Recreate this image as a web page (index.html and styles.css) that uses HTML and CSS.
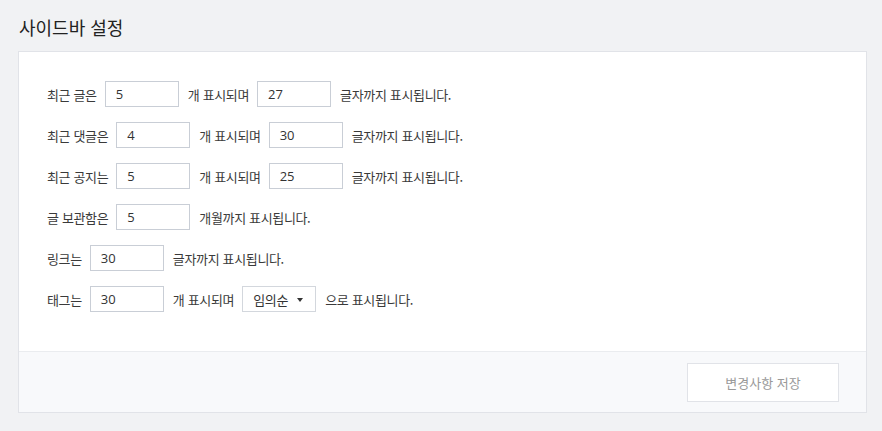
FILE: index.html
```html
<!DOCTYPE html>
<html lang="ko">
<head>
<meta charset="utf-8">
<link rel="stylesheet" href="styles.css">
</head>
<body>
<div class="page">
  <h1 class="title">사이드바 설정</h1>
  <div class="card">
    <div class="card-body">
      <div class="row"><span>최근 글은</span><span class="field">5</span><span>개 표시되며</span><span class="field">27</span><span>글자까지 표시됩니다.</span></div>
      <div class="row"><span>최근 댓글은</span><span class="field">4</span><span>개 표시되며</span><span class="field">30</span><span>글자까지 표시됩니다.</span></div>
      <div class="row"><span>최근 공지는</span><span class="field">5</span><span>개 표시되며</span><span class="field">25</span><span>글자까지 표시됩니다.</span></div>
      <div class="row"><span>글 보관함은</span><span class="field">5</span><span>개월까지 표시됩니다.</span></div>
      <div class="row"><span>링크는</span><span class="field">30</span><span>글자까지 표시됩니다.</span></div>
      <div class="row"><span>태그는</span><span class="field">30</span><span>개 표시되며</span><span class="field select">임의순<span class="caret"></span></span><span>으로 표시됩니다.</span></div>
    </div>
    <div class="card-foot">
      <button class="save">변경사항 저장</button>
    </div>
  </div>
</div>
</body>
</html>
```
FILE: styles.css
```css
* { box-sizing: border-box; }
html, body { margin: 0; padding: 0; }
body {
  background: #f1f2f4;
  font-family: "Noto Sans CJK KR", "Noto Sans", sans-serif;
  color: #333;
  width: 882px;
  height: 431px;
  overflow: hidden;
}
.page { padding: 14px 16px 0 18px; }
.title {
  margin: 0 0 10px 1px;
  font-size: 18px;
  font-weight: 400;
  line-height: 27px;
  color: #222;
}
.card {
  width: 849px;
  background: #fff;
  border: 1px solid #e1e3e8;
}
.card-body {
  padding: 29px 28px 39px;
  display: flex;
  flex-direction: column;
  gap: 15px;
}
.row {
  display: flex;
  align-items: center;
  height: 26px;
  font-size: 13px;
  color: #3a3a3a;
  letter-spacing: -0.35px;
}
.row > span { margin-right: 8px; }
.row > .field { margin-right: 9px; }
.field {
  display: flex;
  align-items: center;
  width: 74px;
  height: 26px;
  border: 1px solid #c9ced6;
  padding-left: 10px;
  font-family: "Open Sans", "Noto Sans CJK KR", sans-serif;
  font-size: 13px;
  letter-spacing: 0;
  color: #333;
}
.select {
  font-family: "Noto Sans CJK KR", sans-serif;
  letter-spacing: -0.35px;
  border-color: #d3d7dd;
  position: relative;
}
.caret {
  position: absolute;
  right: 12px;
  top: 11px;
  width: 0; height: 0;
  border-left: 3px solid transparent;
  border-right: 3px solid transparent;
  border-top: 4px solid #333;
}
.card-foot {
  border-top: 1px solid #eaecef;
  background: #f8f9fb;
  height: 61px;
  display: flex;
  justify-content: flex-end;
  align-items: flex-start;
  padding: 11px 27px 0 0;
}
.save {
  width: 152px;
  height: 39px;
  background: #fff;
  border: 1px solid #e1e3e8;
  font-family: "Noto Sans CJK KR", sans-serif;
  font-size: 13px;
  color: #999;
  padding: 0;
}
```
